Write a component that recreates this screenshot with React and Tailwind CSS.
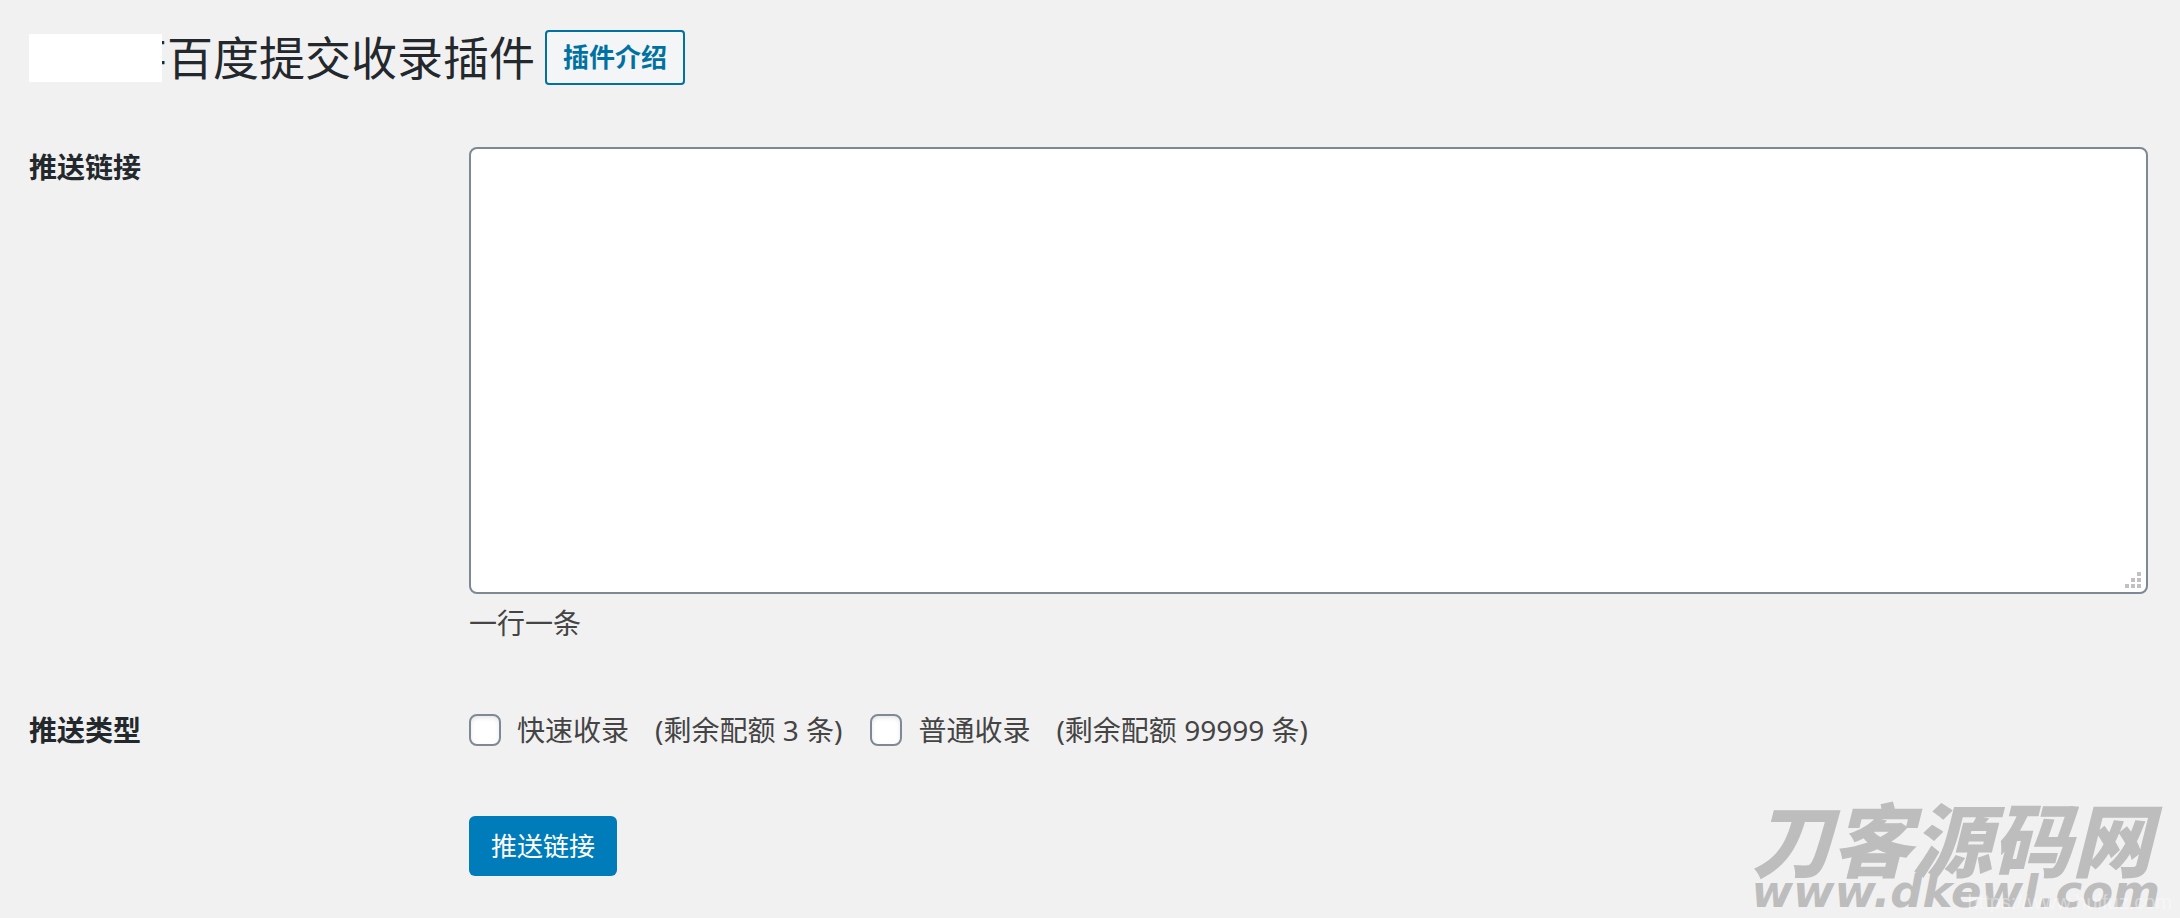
const pushTypes = [
  { id: "fast", name: "快速收录", quota: 3 },
  { id: "normal", name: "普通收录", quota: 99999 },
];

function FormRow({ label, htmlFor, children }) {
  return (
    <div className="flex">
      <div className="w-[440px] shrink-0 text-[28px] leading-[40px] font-bold text-[#23282d]">
        {htmlFor ? <label htmlFor={htmlFor}>{label}</label> : label}
      </div>
      <div className="min-w-0 flex-1">{children}</div>
    </div>
  );
}

function ResizeGrip() {
  return (
    <svg
      className="pointer-events-none absolute right-[7px] bottom-[6px]"
      width="16"
      height="16"
      viewBox="0 0 16 16"
      fill="#c1c1c1"
      aria-hidden="true"
    >
      <path d="M12 0h4v4h-4zM6 6h4v4H6zM12 6h4v4h-4zM0 12h4v4H0zM6 12h4v4H6zM12 12h4v4h-4z" />
    </svg>
  );
}

function Watermark() {
  return (
    <div className="pointer-events-none absolute right-5 bottom-0 text-right whitespace-nowrap text-[#bdbdbd] italic select-none">
      <div className="pr-2 font-['Noto_Sans_CJK_SC',sans-serif] text-[80px] leading-[68px] font-black">
        刀客源码网
      </div>
      <div className="pb-1 font-['DejaVu_Sans',sans-serif] text-[45px] leading-[44px] font-bold">
        www.dkewl.com
      </div>
      <div className="absolute -right-3 bottom-1 font-['Liberation_Sans',sans-serif] text-[20px] leading-[24px] text-white/40 not-italic">
        https://www.huifuz.com
      </div>
    </div>
  );
}

function App() {
  return (
    <div className="relative min-h-screen bg-[#f1f1f1] pt-[25px] pr-8 pb-6 pl-[29px] font-['Noto_Sans','Noto_Sans_CJK_SC',sans-serif] text-[#444]">
      <header className="flex items-center gap-[10px]">
        <h1 className="flex items-center text-[46px] leading-[64px] font-normal text-[#23282d]">
          <span className="relative w-[138px] overflow-hidden text-right">
            <span className="float-right">芋</span>
            <span className="absolute top-[9px] left-0 h-12 w-[133px] bg-white" />
          </span>
          百度提交收录插件
        </h1>
        <a
          href="#intro"
          className="rounded-[4px] border-2 border-[#0071a1] bg-[#f3f5f6] px-4 text-[26px] leading-[51px] font-bold text-[#0071a1]"
        >
          插件介绍
        </a>
      </header>

      <form className="pt-[58px]">
        <FormRow label="推送链接" htmlFor="links">
          <div className="relative">
            <textarea
              id="links"
              className="block h-[447px] w-full resize-none rounded-lg border-2 border-[#7e8993] bg-white px-3 py-1 text-[28px]"
            />
            <ResizeGrip />
          </div>
          <p className="pt-[9px] text-[28px] leading-[40px]">一行一条</p>
        </FormRow>

        <div className="pt-[67px]">
          <FormRow label="推送类型">
            <div className="flex items-center gap-7">
              {pushTypes.map((type) => (
                <label key={type.id} className="flex items-center text-[28px] leading-[40px]">
                  <input
                    type="checkbox"
                    className="mr-4 h-8 w-8 appearance-none rounded-lg border-2 border-[#7e8993] bg-white shadow-[inset_0_2px_4px_rgba(0,0,0,0.1)]"
                  />
                  {type.name}
                  <span className="pl-[26px]">(剩余配额 {type.quota} 条)</span>
                </label>
              ))}
            </div>
          </FormRow>
        </div>

        <div className="pt-[66px] pl-[440px]">
          <button
            type="button"
            className="rounded-md bg-[#007cba] px-[22px] text-[26px] leading-[60px] text-white"
          >
            推送链接
          </button>
        </div>
      </form>

      <Watermark />
    </div>
  );
}

export default App;
